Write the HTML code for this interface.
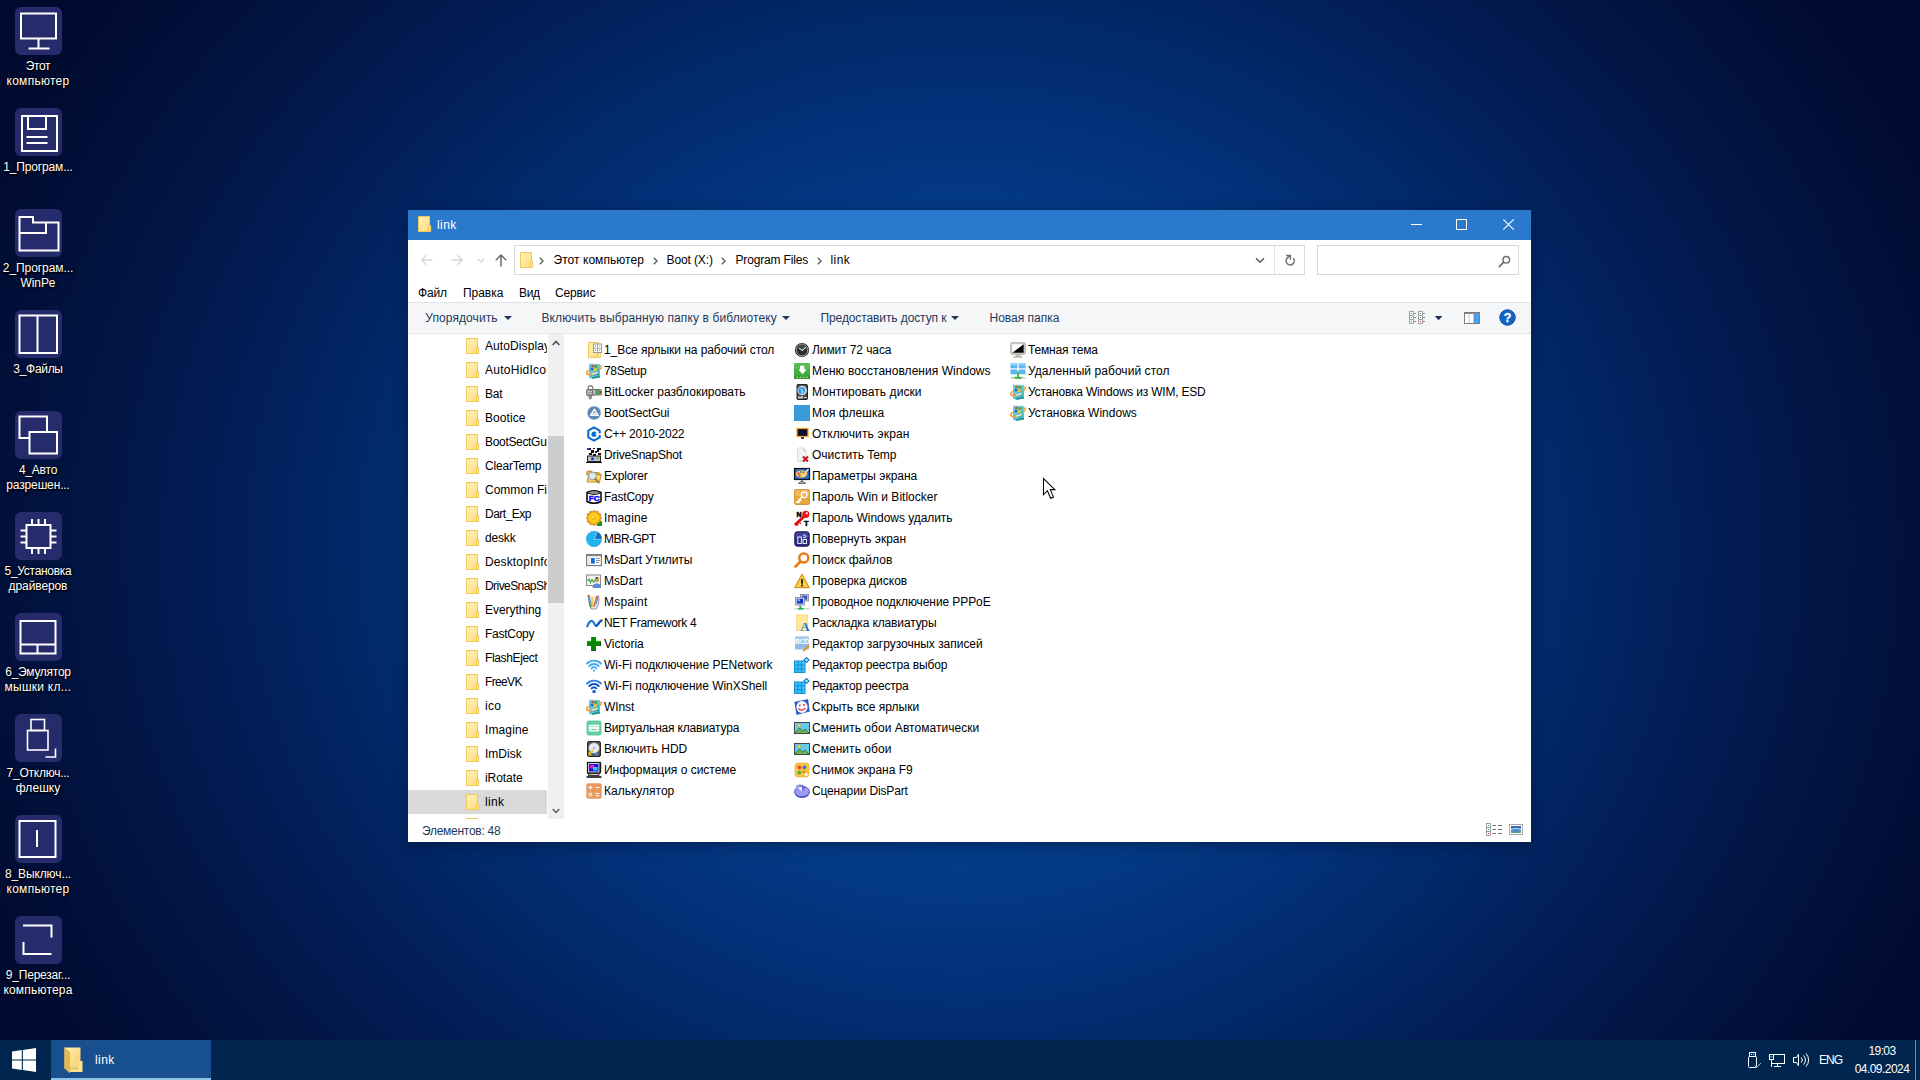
<!DOCTYPE html><html><head><meta charset="utf-8"><title>link</title><style>*{box-sizing:border-box;margin:0;padding:0}
html,body{width:1920px;height:1080px;overflow:hidden;background:#03102f}
body{font-family:"Liberation Sans",sans-serif;font-size:12px;color:#000}
#desk{position:absolute;left:0;top:0;width:1920px;height:1080px;overflow:hidden;
background:radial-gradient(ellipse 1080px 950px at 962px 545px,#0448a8 0%,#04409a 20%,#033b87 34%,#03317a 45%,#022868 57%,#021e58 68%,#021645 80%,#010e36 93%,#010a2e 100%)}
.dicon{position:absolute;left:0;width:76px;height:96px}
.dbox{position:absolute;left:14.500px;top:0;width:47.500px;height:48px;border-radius:6px;background:#262b6b}
.dbox svg{position:absolute;left:-.5px;top:0}
.dlab{position:absolute;left:-12px;width:100px;top:52px;text-align:center;color:#fff;font-size:12px;line-height:15px;text-shadow:0 1px 2px #000,0 0 3px rgba(0,0,0,.9),1px 1px 1px rgba(0,0,0,.8)}
#win{position:absolute;left:408px;top:210px;width:1123px;height:632px;background:#fff;box-shadow:0 0 0 1px rgba(10,40,100,.45),0 3px 14px rgba(0,0,0,.32)}
#title{position:absolute;left:0;top:0;width:100%;height:30px;background:#2b79cd}
.tfold{position:absolute;left:9px;top:6px;width:16px;height:16px}
.ttext{position:absolute;left:29px;top:0;line-height:30px;color:#fff;font-size:12px}
#nav{position:absolute;left:0;top:30px;width:100%;height:43px}
#addr{position:absolute;left:106px;top:5px;width:791px;height:30px;border:1px solid #d9d9d9;background:#fff}
#addr .afold{position:absolute;left:4px;top:6px}
.crumb{position:absolute;top:11px}
.ct{position:absolute;top:0;line-height:28px;font-size:12px;color:#000;white-space:nowrap}
#search{position:absolute;left:909px;top:5px;width:202px;height:30px;border:1px solid #d9d9d9}
#menu{position:absolute;left:0;top:73px;width:100%;height:19px}
#menu span{position:absolute;top:0;line-height:20px;white-space:nowrap}
#tool{position:absolute;left:0;top:92px;width:100%;height:32px;background:#f5f6f7;border-top:1px solid #e3e4e6;border-bottom:1px solid #e8e9ea}
.tb{position:absolute;top:0;line-height:30px;color:#1e395b;white-space:nowrap}
.dd{position:absolute;top:13px;width:0;height:0;border-left:4px solid transparent;border-right:4px solid transparent;border-top:4px solid #1e395b}
#tree{position:absolute;left:0;top:124px;width:139px;height:485px;overflow:hidden}
.trow{position:absolute;left:0;width:139px;height:24px}
.trow.sel{background:#d9d9d9}
.trow svg{position:absolute;left:57px;top:4px}
.trow span{position:absolute;left:77px;top:0;line-height:24px;white-space:nowrap}
#vsb{position:absolute;left:140px;top:124px;width:16px;height:485px;background:#f0f0f0}
#thumb{position:absolute;left:0;top:102px;width:16px;height:167px;background:#cdcdcd}
#files{position:absolute;left:0;top:0}
.f{position:absolute;height:16px;white-space:nowrap}
.f svg{position:absolute;left:0;top:0}
.f span{position:absolute;left:18px;top:0;line-height:16px}
#status{position:absolute;left:0;top:610px;width:100%;height:22px}
#status span{position:absolute;left:14px;top:0;line-height:22px;color:#1e395b}
#tbar{position:absolute;left:0;top:1040px;width:1920px;height:40px;background:#00264f;color:#fff}
#start{position:absolute;left:0;top:0;width:48px;height:40px}
#task{position:absolute;left:51px;top:0;width:160px;height:40px;background:#174f8f}
#task span{position:absolute;left:44px;top:1px;line-height:39px}
#task .ul{position:absolute;left:0;bottom:0;width:100%;height:2px;background:#8fc3ea}
#lang{position:absolute;left:1819px;top:1px;line-height:39px;font-size:12px}
#clock{position:absolute;left:1845px;width:74px;top:2px;text-align:center;line-height:18px;font-size:12px}
#sd{position:absolute;left:1915px;top:0;width:1px;height:40px;background:#7f8a99}
svg{display:block;overflow:visible}

#status i{position:absolute;left:102px;top:5px;width:1px;height:11px;background:#f3f3f3}
</style></head><body>
<svg width="0" height="0" style="position:absolute"><defs><linearGradient id="gf" x1="0" y1="0" x2="1" y2="1"><stop offset="0" stop-color="#fff2bd"/><stop offset="1" stop-color="#ffdc7a"/></linearGradient><linearGradient id="gf2" x1="0" y1="0" x2="1" y2="1"><stop offset="0" stop-color="#fff0b4"/><stop offset="1" stop-color="#f7cf66"/></linearGradient><linearGradient id="gi" x1="0" y1="0" x2="1" y2="1"><stop offset="0" stop-color="#a6e2f5"/><stop offset=".5" stop-color="#62c2de"/><stop offset="1" stop-color="#27a396"/></linearGradient></defs></svg>
<div id="desk">
<div class="dicon" style="top:7px"><div class="dbox"><svg width="48" height="48" viewBox="0 0 48 48" ><rect x="7" y="6.5" width="35" height="25" fill="none" stroke="#fff" stroke-width="2"/><path d="M24.5 31.5v10M14.5 41.5h21" fill="none" stroke="#fff" stroke-width="2"/></svg></div><div class="dlab"><span style="letter-spacing:-0.327px">Этот</span><br><span style="letter-spacing:0.276px">компьютер</span></div></div>
<div class="dicon" style="top:108px"><div class="dbox"><svg width="48" height="48" viewBox="0 0 48 48" ><rect x="8" y="8" width="35" height="35" fill="none" stroke="#fff" stroke-width="2"/><path d="M14 8v13h18v-13M12.5 29h21M12.5 35h21" fill="none" stroke="#fff" stroke-width="2"/></svg></div><div class="dlab"><span style="letter-spacing:-0.141px">1_Програм...</span></div></div>
<div class="dicon" style="top:209px"><div class="dbox"><svg width="48" height="48" viewBox="0 0 48 48" ><path d="M5.5 8h13.5v5.5h25.5v28h-39z" fill="none" stroke="#fff" stroke-width="2"/><path d="M5.5 24h26.5v-10.5" fill="none" stroke="#fff" stroke-width="2"/></svg></div><div class="dlab"><span style="letter-spacing:-0.075px">2_Програм...</span><br><span style="letter-spacing:-0.089px">WinPe</span></div></div>
<div class="dicon" style="top:310px"><div class="dbox"><svg width="48" height="48" viewBox="0 0 48 48" ><rect x="5.5" y="5.5" width="37.5" height="37.5" fill="none" stroke="#fff" stroke-width="2"/><path d="M23.5 5.5v37.5" fill="none" stroke="#fff" stroke-width="2"/></svg></div><div class="dlab"><span style="letter-spacing:-0.312px">3_Файлы</span></div></div>
<div class="dicon" style="top:411px"><div class="dbox"><svg width="48" height="48" viewBox="0 0 48 48" ><rect x="15.5" y="21" width="27.5" height="21.5" fill="none" stroke="#fff" stroke-width="2"/><path d="M15.5 27h-10v-21.5h27.5v15.5" fill="none" stroke="#fff" stroke-width="2"/></svg></div><div class="dlab"><span style="letter-spacing:-0.217px">4_Авто</span><br><span style="letter-spacing:-0.136px">разрешен...</span></div></div>
<div class="dicon" style="top:512px"><div class="dbox"><svg width="48" height="48" viewBox="0 0 48 48" ><rect x="12.5" y="13" width="24" height="23" fill="none" stroke="#fff" stroke-width="2"/><path d="M18 7v6M24.5 7v6M31 7v6M18 36v6M24.5 36v6M31 36v6M6.5 18.5h6M6.5 24.5h6M6.5 30.5h6M36.5 18.5h6M36.5 24.5h6M36.5 30.5h6" fill="none" stroke="#fff" stroke-width="2"/></svg></div><div class="dlab"><span style="letter-spacing:-0.298px">5_Установка</span><br><span style="letter-spacing:-0.100px">драйверов</span></div></div>
<div class="dicon" style="top:613px"><div class="dbox"><svg width="48" height="48" viewBox="0 0 48 48" ><rect x="6.5" y="8" width="35" height="32.5" fill="none" stroke="#fff" stroke-width="2"/><path d="M6.5 31.5h35M23.5 31.5v9" fill="none" stroke="#fff" stroke-width="2"/></svg></div><div class="dlab"><span style="letter-spacing:-0.277px">6_Эмулятор</span><br><span style="letter-spacing:0.237px">мышки кл...</span></div></div>
<div class="dicon" style="top:714px"><div class="dbox"><svg width="48" height="48" viewBox="0 0 48 48" ><rect x="17" y="5.5" width="13.5" height="11" fill="none" stroke="#fff" stroke-width="1.6"/><rect x="13.5" y="16.5" width="20.5" height="19.5" fill="none" stroke="#fff" stroke-width="1.6"/><path d="M41.5 34.5v8.5h-10" fill="none" stroke="#fff" stroke-width="1.6"/></svg></div><div class="dlab"><span style="letter-spacing:-0.242px">7_Отключ...</span><br><span style="letter-spacing:0.051px">флешку</span></div></div>
<div class="dicon" style="top:815px"><div class="dbox"><svg width="48" height="48" viewBox="0 0 48 48" ><rect x="5.5" y="6" width="36" height="36" fill="none" stroke="#fff" stroke-width="2"/><path d="M23 15v17" fill="none" stroke="#fff" stroke-width="2"/></svg></div><div class="dlab"><span style="letter-spacing:-0.105px">8_Выключ...</span><br><span style="letter-spacing:0.276px">компьютер</span></div></div>
<div class="dicon" style="top:916px"><div class="dbox"><svg width="48" height="48" viewBox="0 0 48 48" ><path d="M9 9.5h28.5v12M9.5 26v12h28" fill="none" stroke="#fff" stroke-width="2"/></svg></div><div class="dlab"><span style="letter-spacing:-0.211px">9_Перезаг...</span><br><span style="letter-spacing:0.201px">компьютера</span></div></div>
<div id="win">
<div id="title"><span class="tfold"><svg width="16" height="16" viewBox="0 0 16 16" ><path d="M1.5 .5h11v15h-11z" fill="url(#gf)" stroke="#efc95c"/><path d="M11.3 9.5h2.400v6h-2.400z" fill="#ffe69a" stroke="#efc95c"/></svg></span><span class="ttext" style="letter-spacing:0.421px">link</span><svg style="position:absolute;left:1003px;top:14px" width="11" height="2"><rect width="11" height="1" y="0" fill="#fff"/></svg><svg style="position:absolute;left:1048px;top:9px" width="11" height="11"><rect x=".5" y=".5" width="10" height="10" fill="none" stroke="#fff"/></svg><svg style="position:absolute;left:1095px;top:9px" width="11" height="11"><path d="M.3 .3l10.400 10.400M10.700 .3l-10.400 10.400" stroke="#fff" stroke-width="1.100"/></svg></div>
<div id="nav"><svg style="position:absolute;left:13px;top:14px" width="12" height="12" viewBox="0 0 12 12"><path d="M11.500 6h-10.500M5.500 1.200l-4.800 4.800 4.800 4.800" fill="none" stroke="#d6d6d6" stroke-width="1.300"/></svg><svg style="position:absolute;left:43px;top:14px" width="12" height="12" viewBox="0 0 12 12"><path d="M.5 6h10.500M6.500 1.200l4.800 4.800-4.800 4.800" fill="none" stroke="#d6d6d6" stroke-width="1.300"/></svg><svg style="position:absolute;left:69px;top:18px" width="8" height="5" viewBox="0 0 8 5"><path d="M.7 .7l3.300 3.300 3.300-3.300" fill="none" stroke="#d0d0d0" stroke-width="1.100"/></svg><svg style="position:absolute;left:87px;top:14px" width="12" height="13" viewBox="0 0 12 13"><path d="M6 12.500v-11M.8 6.200l5.200-5.200 5.200 5.200" fill="none" stroke="#6b6b6b" stroke-width="1.500"/></svg><div id="addr"><svg class=afold width="16" height="16" viewBox="0 0 16 16" ><path d="M1.5 .5h11v15h-11z" fill="url(#gf)" stroke="#efc95c"/><path d="M11.3 9.5h2.400v6h-2.400z" fill="#ffe69a" stroke="#efc95c"/></svg><span class="crumb" style="left:24px"><svg width="5" height="8" viewBox="0 0 5 8"><path d="M.8 .8l3.200 3.200-3.200 3.200" fill="none" stroke="#5e5e5e" stroke-width="1.400"/></svg></span><span class="ct" style="left:38.5px;letter-spacing:0.048px">Этот компьютер</span><span class="crumb" style="left:138px"><svg width="5" height="8" viewBox="0 0 5 8"><path d="M.8 .8l3.200 3.200-3.200 3.200" fill="none" stroke="#5e5e5e" stroke-width="1.400"/></svg></span><span class="ct" style="left:151.5px;letter-spacing:-0.118px">Boot (X:)</span><span class="crumb" style="left:206px"><svg width="5" height="8" viewBox="0 0 5 8"><path d="M.8 .8l3.200 3.200-3.200 3.200" fill="none" stroke="#5e5e5e" stroke-width="1.400"/></svg></span><span class="ct" style="left:220.5px;letter-spacing:-0.161px">Program Files</span><span class="crumb" style="left:302px"><svg width="5" height="8" viewBox="0 0 5 8"><path d="M.8 .8l3.200 3.200-3.200 3.200" fill="none" stroke="#5e5e5e" stroke-width="1.400"/></svg></span><span class="ct" style="left:315.5px;letter-spacing:0.421px">link</span><svg style="position:absolute;left:740px;top:11px" width="10" height="7" viewBox="0 0 10 7"><path d="M1 1.200l4 4 4-4" fill="none" stroke="#5a5a5a" stroke-width="1.500"/></svg><div style="position:absolute;left:759px;top:0;width:1px;height:29px;background:#e0e0e0"></div><svg style="position:absolute;left:769px;top:8px" width="12" height="13" viewBox="0 0 12 13"><path d="M9.300 4.200A4.100 4.100 0 1 1 3.100 4.100L5.800 1.900" fill="none" stroke="#707070" stroke-width="1.500"/><path d="M2 1.500H6.400V5.800" fill="none" stroke="#707070" stroke-width="1.400"/></svg></div><div id="search"><svg style="position:absolute;left:180px;top:9px" width="13" height="13" viewBox="0 0 13 13"><circle cx="8.300" cy="4.700" r="3.300" fill="none" stroke="#6e6e6e" stroke-width="1.500"/><path d="M5.800 7.200l-5 5" stroke="#6e6e6e" stroke-width="1.700"/></svg></div></div>
<div id="menu"><span style="left:10px;letter-spacing:-0.129px">Файл</span><span style="left:55px;letter-spacing:-0.041px">Правка</span><span style="left:111px;letter-spacing:-0.340px">Вид</span><span style="left:147px;letter-spacing:-0.132px">Сервис</span></div>
<div id="tool"><span class="tb" style="left:17.30000000000001px;letter-spacing:0.080px">Упорядочить</span><i class="dd" style="left:95.5px"></i><span class="tb" style="left:133.5px;letter-spacing:0.105px">Включить выбранную папку в библиотеку</span><i class="dd" style="left:374px"></i><span class="tb" style="left:412.5px;letter-spacing:-0.103px">Предоставить доступ к</span><i class="dd" style="left:543px"></i><span class="tb" style="left:581.5px;letter-spacing:-0.014px">Новая папка</span><svg style="position:absolute;left:1001px;top:8px" width="36" height="14" viewBox="0 0 36 14"><g fill="#fff" stroke="#a2a2a2" stroke-width="1"><rect x=".5" y=".5" width="4" height="4"/><rect x=".5" y="4.500" width="4" height="4"/><rect x=".5" y="8.500" width="4" height="4"/><rect x="9.500" y=".5" width="4" height="4"/><rect x="9.500" y="4.500" width="4" height="4"/><rect x="9.500" y="8.500" width="4" height="4"/></g><g stroke="#8a8a8a" stroke-width="1"><path d="M5 2.500h2M5 6.500h2M5 10.500h2M14 2.500h2M14 6.500h2M14 10.500h2"/></g><g><rect x="2" y="2" width="1" height="1" fill="#3a7a5a"/><rect x="2" y="6" width="1" height="1" fill="#4a8af0"/><rect x="2" y="10" width="1" height="1" fill="#e02020"/><rect x="11" y="2" width="1" height="1" fill="#3a7a5a"/><rect x="11" y="6" width="1" height="1" fill="#4a8af0"/><rect x="11" y="10" width="1" height="1" fill="#e02020"/></g><path d="M25.800 5h7.600l-3.800 4.200z" fill="#1e2f55"/></svg><svg style="position:absolute;left:1056px;top:9px" width="16" height="12" viewBox="0 0 16 12"><rect x=".5" y=".5" width="15" height="11" fill="#fff" stroke="#7d7d7d"/><rect x="1" y="1" width="14" height="1" fill="#8a8a8a"/><rect x="9.500" y="2" width="5.500" height="9" fill="#4a9fe6"/><path d="M5 2v9" stroke="#d0d0d0" stroke-width="1"/></svg><svg style="position:absolute;left:1091px;top:6.200px" width="17" height="17" viewBox="0 0 17 17"><circle cx="8.500" cy="8.500" r="7.800" fill="#0b64c8" stroke="#0a3f8a" stroke-width=".8"/><text x="8.500" y="13" font-family="Liberation Sans" font-weight="bold" font-size="12.500" text-anchor="middle" fill="#fff" stroke="#fff" stroke-width=".3">?</text></svg></div>
<div id="tree">
<div class="trow" style="top:0px"><svg width="16" height="16" viewBox="0 0 16 16" ><path d="M1.5 .5h11v15h-11z" fill="url(#gf)" stroke="#efc95c"/><path d="M11.3 9.5h2.400v6h-2.400z" fill="#ffe69a" stroke="#efc95c"/></svg><span style="letter-spacing:0.088px">AutoDisplay</span></div>
<div class="trow" style="top:24px"><svg width="16" height="16" viewBox="0 0 16 16" ><path d="M1.5 .5h11v15h-11z" fill="url(#gf)" stroke="#efc95c"/><path d="M11.3 9.5h2.400v6h-2.400z" fill="#ffe69a" stroke="#efc95c"/></svg><span style="letter-spacing:0.255px">AutoHidIcons</span></div>
<div class="trow" style="top:48px"><svg width="16" height="16" viewBox="0 0 16 16" ><path d="M1.5 .5h11v15h-11z" fill="url(#gf)" stroke="#efc95c"/><path d="M11.3 9.5h2.400v6h-2.400z" fill="#ffe69a" stroke="#efc95c"/></svg><span style="letter-spacing:-0.172px">Bat</span></div>
<div class="trow" style="top:72px"><svg width="16" height="16" viewBox="0 0 16 16" ><path d="M1.5 .5h11v15h-11z" fill="url(#gf)" stroke="#efc95c"/><path d="M11.3 9.5h2.400v6h-2.400z" fill="#ffe69a" stroke="#efc95c"/></svg><span style="letter-spacing:0.067px">Bootice</span></div>
<div class="trow" style="top:96px"><svg width="16" height="16" viewBox="0 0 16 16" ><path d="M1.5 .5h11v15h-11z" fill="url(#gf)" stroke="#efc95c"/><path d="M11.3 9.5h2.400v6h-2.400z" fill="#ffe69a" stroke="#efc95c"/></svg><span style="letter-spacing:-0.322px">BootSectGui</span></div>
<div class="trow" style="top:120px"><svg width="16" height="16" viewBox="0 0 16 16" ><path d="M1.5 .5h11v15h-11z" fill="url(#gf)" stroke="#efc95c"/><path d="M11.3 9.5h2.400v6h-2.400z" fill="#ffe69a" stroke="#efc95c"/></svg><span style="letter-spacing:-0.198px">ClearTemp</span></div>
<div class="trow" style="top:144px"><svg width="16" height="16" viewBox="0 0 16 16" ><path d="M1.5 .5h11v15h-11z" fill="url(#gf)" stroke="#efc95c"/><path d="M11.3 9.5h2.400v6h-2.400z" fill="#ffe69a" stroke="#efc95c"/></svg><span style="letter-spacing:-0.002px">Common Files</span></div>
<div class="trow" style="top:168px"><svg width="16" height="16" viewBox="0 0 16 16" ><path d="M1.5 .5h11v15h-11z" fill="url(#gf)" stroke="#efc95c"/><path d="M11.3 9.5h2.400v6h-2.400z" fill="#ffe69a" stroke="#efc95c"/></svg><span style="letter-spacing:-0.504px">Dart_Exp</span></div>
<div class="trow" style="top:192px"><svg width="16" height="16" viewBox="0 0 16 16" ><path d="M1.5 .5h11v15h-11z" fill="url(#gf)" stroke="#efc95c"/><path d="M11.3 9.5h2.400v6h-2.400z" fill="#ffe69a" stroke="#efc95c"/></svg><span style="letter-spacing:-0.172px">deskk</span></div>
<div class="trow" style="top:216px"><svg width="16" height="16" viewBox="0 0 16 16" ><path d="M1.5 .5h11v15h-11z" fill="url(#gf)" stroke="#efc95c"/><path d="M11.3 9.5h2.400v6h-2.400z" fill="#ffe69a" stroke="#efc95c"/></svg><span style="letter-spacing:0.132px">DesktopInfo</span></div>
<div class="trow" style="top:240px"><svg width="16" height="16" viewBox="0 0 16 16" ><path d="M1.5 .5h11v15h-11z" fill="url(#gf)" stroke="#efc95c"/><path d="M11.3 9.5h2.400v6h-2.400z" fill="#ffe69a" stroke="#efc95c"/></svg><span style="letter-spacing:-0.565px">DriveSnapShot</span></div>
<div class="trow" style="top:264px"><svg width="16" height="16" viewBox="0 0 16 16" ><path d="M1.5 .5h11v15h-11z" fill="url(#gf)" stroke="#efc95c"/><path d="M11.3 9.5h2.400v6h-2.400z" fill="#ffe69a" stroke="#efc95c"/></svg><span style="letter-spacing:-0.045px">Everything</span></div>
<div class="trow" style="top:288px"><svg width="16" height="16" viewBox="0 0 16 16" ><path d="M1.5 .5h11v15h-11z" fill="url(#gf)" stroke="#efc95c"/><path d="M11.3 9.5h2.400v6h-2.400z" fill="#ffe69a" stroke="#efc95c"/></svg><span style="letter-spacing:-0.264px">FastCopy</span></div>
<div class="trow" style="top:312px"><svg width="16" height="16" viewBox="0 0 16 16" ><path d="M1.5 .5h11v15h-11z" fill="url(#gf)" stroke="#efc95c"/><path d="M11.3 9.5h2.400v6h-2.400z" fill="#ffe69a" stroke="#efc95c"/></svg><span style="letter-spacing:-0.353px">FlashEject</span></div>
<div class="trow" style="top:336px"><svg width="16" height="16" viewBox="0 0 16 16" ><path d="M1.5 .5h11v15h-11z" fill="url(#gf)" stroke="#efc95c"/><path d="M11.3 9.5h2.400v6h-2.400z" fill="#ffe69a" stroke="#efc95c"/></svg><span style="letter-spacing:-0.656px">FreeVK</span></div>
<div class="trow" style="top:360px"><svg width="16" height="16" viewBox="0 0 16 16" ><path d="M1.5 .5h11v15h-11z" fill="url(#gf)" stroke="#efc95c"/><path d="M11.3 9.5h2.400v6h-2.400z" fill="#ffe69a" stroke="#efc95c"/></svg><span style="letter-spacing:0.302px">ico</span></div>
<div class="trow" style="top:384px"><svg width="16" height="16" viewBox="0 0 16 16" ><path d="M1.5 .5h11v15h-11z" fill="url(#gf)" stroke="#efc95c"/><path d="M11.3 9.5h2.400v6h-2.400z" fill="#ffe69a" stroke="#efc95c"/></svg><span style="letter-spacing:0.114px">Imagine</span></div>
<div class="trow" style="top:408px"><svg width="16" height="16" viewBox="0 0 16 16" ><path d="M1.5 .5h11v15h-11z" fill="url(#gf)" stroke="#efc95c"/><path d="M11.3 9.5h2.400v6h-2.400z" fill="#ffe69a" stroke="#efc95c"/></svg><span style="letter-spacing:0.013px">ImDisk</span></div>
<div class="trow" style="top:432px"><svg width="16" height="16" viewBox="0 0 16 16" ><path d="M1.5 .5h11v15h-11z" fill="url(#gf)" stroke="#efc95c"/><path d="M11.3 9.5h2.400v6h-2.400z" fill="#ffe69a" stroke="#efc95c"/></svg><span style="letter-spacing:-0.076px">iRotate</span></div>
<div class="trow sel" style="top:456px"><svg width="16" height="16" viewBox="0 0 16 16" ><path d="M1.5 .5h11v15h-11z" fill="url(#gf)" stroke="#efc95c"/><path d="M11.3 9.5h2.400v6h-2.400z" fill="#ffe69a" stroke="#efc95c"/></svg><span style="letter-spacing:0.309px">link</span></div>
<div class="trow" style="top:480px"><svg width="16" height="16" viewBox="0 0 16 16" ><path d="M1.5 .5h11v15h-11z" fill="url(#gf)" stroke="#efc95c"/><path d="M11.3 9.5h2.400v6h-2.400z" fill="#ffe69a" stroke="#efc95c"/></svg></div>
</div>
<div id="vsb"><div id="thumb"></div><svg style="position:absolute;left:4px;top:5.500px" width="8" height="6" viewBox="0 0 8 6"><path d="M.6 5l3.400-3.600 3.400 3.600" fill="none" stroke="#505050" stroke-width="1.600"/></svg><svg style="position:absolute;left:4px;top:474px" width="8" height="6" viewBox="0 0 8 6"><path d="M.7 1l3.300 3.500 3.300-3.500" fill="none" stroke="#5a5a5a" stroke-width="1.400"/></svg></div>
<div id="files">
<div class="f" style="left:178px;top:132px"><svg width="16" height="16" viewBox="0 0 16 16" ><path d="M2.500 .5h10v15h-10z" fill="url(#gf)" stroke="#efc95c"/><path d="M11.500 10h2.800v5.500h-2.800z" fill="#ffe69a" stroke="#efc95c"/><rect x="7.500" y="2" width="8" height="8.500" fill="#fff" stroke="#9a9a9a"/><path d="M11.500 2v8.500M7.500 6.200h8" stroke="#9a9a9a" stroke-width=".8"/><rect x="9" y="3.600" width="1" height="1" fill="#6a9a4a"/><rect x="13" y="3.600" width="1" height="1" fill="#e0b030"/><rect x="9" y="7.800" width="1" height="1" fill="#3a7ad8"/><rect x="13" y="7.800" width="1" height="1" fill="#d83a3a"/></svg><span style="letter-spacing:-0.065px">1_Все ярлыки на рабочий стол</span></div>
<div class="f" style="left:178px;top:153px"><svg width="16" height="16" viewBox="0 0 16 16" ><path d="M3.3 .4l10.500 .7v13.300l-7.600 1.400-2.900-1.300z" fill="url(#gi)"/><path d="M3.300 .4l1.300 .5v14.300l-1.300-.7z" fill="#5ab8d8"/><path d="M6.200 14.300l7.600-1.200v1.300l-7.600 1.400z" fill="#1f8f86"/><path d="M5.200 1.900q1.400-.7 2.700 0v2.500q-1.300-.7-2.700 0z" fill="#ee4a23"/><path d="M8.300 1.900q1.300.7 2.700 0v2.500q-1.400.7-2.700 0z" fill="#4ea32c"/><path d="M4.700 5q1.400-.7 2.700 0v2.600q-1.300-.7-2.700 0z" fill="#0f6fd6"/><path d="M7.800 5.100q1.300.7 2.700 0v2.600q-1.400.7-2.700 0z" fill="#fbc70e"/><path d="M13.300 3.300c2.600-.9 3 1.300 .4 3.500" fill="none" stroke="#f59d2f" stroke-width="1.400"/><path d="M3.400 7.100c-3.600 1.500-3.900 4.400 .6 4.400 2.400 0 5-.8 7-1.800" fill="none" stroke="#f59d2f" stroke-width="1.500"/><path d="M6.500 11c1.900-.3 3.400-.8 4.700-1.600" fill="none" stroke="#fff1d4" stroke-width="1.200" stroke-linecap="round"/></svg><span style="letter-spacing:-0.353px">78Setup</span></div>
<div class="f" style="left:178px;top:174px"><svg width="16" height="16" viewBox="0 0 16 16" ><path d="M2.200 6v-2a2.300 2.300 0 0 1 4.600 0v2" fill="none" stroke="#8a8a8a" stroke-width="1.400"/><rect x=".5" y="5.500" width="7" height="6" rx="1" fill="#9a9a9a" stroke="#6e6e6e"/><path d="M.8 7.500h6.500M.8 9.500h6.500" stroke="#c8c8c8" stroke-width=".8"/><rect x="3" y="11" width="2.500" height="4" rx="1.200" fill="#9a9a9a" stroke="#6e6e6e" stroke-width=".8"/><rect x="6.500" y="5.500" width="9" height="5.500" rx="1" fill="#b8b8b8" stroke="#6e6e6e"/><rect x="10" y="6.800" width="3.500" height="3" fill="#3cc43c" stroke="#555" stroke-width=".6"/><rect x="14" y="7" width="1" height="2.500" fill="#555"/></svg><span style="letter-spacing:-0.012px">BitLocker разблокировать</span></div>
<div class="f" style="left:178px;top:195px"><svg width="16" height="16" viewBox="0 0 16 16" ><circle cx="8.100" cy="7.900" r="7.200" fill="#c9d6e8"/><circle cx="8.100" cy="7.900" r="6.500" fill="#5f84b7"/><path d="M8.300 4.300l3.900 6h-7.600z" fill="none" stroke="#fff" stroke-width="1.500" stroke-linejoin="round"/><path d="M6.300 8.600h3.400" stroke="#fff" stroke-width="1.400"/></svg><span style="letter-spacing:-0.193px">BootSectGui</span></div>
<div class="f" style="left:178px;top:216px"><svg width="16" height="16" viewBox="0 0 16 16" ><path d="M8 1.300l5.700 3.300v6.800l-5.700 3.300-5.700-3.300v-6.800z" fill="#fff" stroke="#0b6cd0" stroke-width="2.100" stroke-linejoin="round"/><rect x="12" y="7.300" width="4" height="1.700" fill="#fff"/><circle cx="8" cy="8.200" r="2.600" fill="#0b6cd0"/><rect x="9.500" y="7.600" width="2.500" height="1.100" fill="#fff"/></svg><span style="letter-spacing:-0.243px">C++ 2010-2022</span></div>
<div class="f" style="left:178px;top:237px"><svg width="16" height="16" viewBox="0 0 16 16" ><path d="M2 1h3v2h-3zM7 1h2v1h-2zM11 1h4v2h-2v2h-2zM5 3h3v3h-3zM9 4h2v2h-2zM3 6h3v2h-3zM12 6h3v2h-3zM7 7h3v2h-3z" fill="#111"/><rect x="1" y="1" width="2.500" height="2" fill="#1a3ae0"/><rect x="1.500" y="9" width="13" height="5.500" fill="#c0c0c0" stroke="#222" stroke-width="1"/><rect x="10.500" y="10.500" width="2.500" height="1.500" fill="#2ad02a"/><path d="M0 15.500h16" stroke="#111" stroke-width="1"/><circle cx="6.500" cy="11.800" r="1.500" fill="#1a3ae0"/></svg><span style="letter-spacing:-0.228px">DriveSnapShot</span></div>
<div class="f" style="left:178px;top:258px"><svg width="16" height="16" viewBox="0 0 16 16" ><path d="M.8 4.500c0-1 .5-1.500 1.500-1.500h3l1.500 1.500h5.500c1 0 1.500.5 1.500 1.500v1h-13z" fill="#e8b84a" stroke="#a87818" stroke-width=".8"/><path d="M1 14l1.800-7.500h12.700l-2 7.500z" fill="#fbd66e" stroke="#a87818" stroke-width=".8"/><circle cx="6.500" cy="8" r="3.800" fill="#d8ecfa" stroke="#8aa4bc" stroke-width="1.100" fill-opacity=".9"/><path d="M9.200 10.800l3.500 3.700" stroke="#b07a28" stroke-width="2" stroke-linecap="round"/></svg><span style="letter-spacing:-0.148px">Explorer</span></div>
<div class="f" style="left:178px;top:279px"><svg width="16" height="16" viewBox="0 0 16 16" ><path d="M1 3.500q7-3.600 14 0v9q-7 3.600-14 0z" fill="#fff" stroke="#000" stroke-width="1.500" stroke-linejoin="round"/><path d="M1.700 3.600q6.300-3 12.600 0q-6.300 2.600-12.600 0z" fill="#8c8c8c"/><path d="M1.700 4.300q6.300 2.600 12.600 0" fill="none" stroke="#000" stroke-width=".9"/><text x="8.100" y="12.200" font-family="Liberation Sans" font-weight="bold" font-size="8" text-anchor="middle" fill="#0a0aff" stroke="#0a0aff" stroke-width=".55">FC</text></svg><span style="letter-spacing:-0.232px">FastCopy</span></div>
<div class="f" style="left:178px;top:300px"><svg width="16" height="16" viewBox="0 0 16 16" ><path d="M8.00 0.20L9.60 2.01L11.90 1.25L12.38 3.62L14.75 4.10L13.99 6.40L15.80 8.00L13.99 9.60L14.75 11.90L12.38 12.38L11.90 14.75L9.60 13.99L8.00 15.80L6.40 13.99L4.10 14.75L3.62 12.38L1.25 11.90L2.01 9.60L0.20 8.00L2.01 6.40L1.25 4.10L3.62 3.62L4.10 1.25L6.40 2.01z" fill="#f7b50c" stroke="#b8690c" stroke-width=".8" stroke-linejoin="round"/><circle cx="8" cy="8" r="5" fill="#fdd21c"/><circle cx="7.600" cy="7.700" r="2.200" fill="#f7a80a"/><circle cx="7.300" cy="7.300" r="1.100" fill="#fff3b0"/><path d="M16 11.200v4.800h-5.200a6 6 0 0 1 5.200-4.800z" fill="#1f8f12"/></svg><span style="letter-spacing:0.114px">Imagine</span></div>
<div class="f" style="left:178px;top:321px"><svg width="16" height="16" viewBox="0 0 16 16" ><circle cx="8" cy="8" r="7.700" fill="#1fb4ef" stroke="#1697d6" stroke-width=".5"/><path d="M8.400 8l2.600-7.200a7.700 7.700 0 0 1 4.700 7.200z" fill="#1a6eb4"/><path d="M7 8.300h8.700M8.300 8.300l2.600-7.300" fill="none" stroke="#9fe0fa" stroke-width=".7"/></svg><span style="letter-spacing:-0.549px">MBR-GPT</span></div>
<div class="f" style="left:178px;top:342px"><svg width="16" height="16" viewBox="0 0 16 16" ><rect x=".6" y="2.600" width="14.800" height="11" fill="#fff" stroke="#71757a" stroke-width="1.100"/><rect x="1" y="3" width="14" height="1.300" fill="#8a8e93"/><rect x="1.500" y="5" width="2.800" height="8" fill="#e6e6e6"/><rect x="5" y="6" width="3.800" height="5.600" fill="#0a6ee0"/><path d="M10 6.500h3.800M10 8.500h3.800M10 10.500h3" stroke="#8a8e93" stroke-width="1"/></svg><span style="letter-spacing:-0.100px">MsDart Утилиты</span></div>
<div class="f" style="left:178px;top:363px"><svg width="16" height="16" viewBox="0 0 16 16" ><rect x=".5" y="2" width="14" height="10.500" fill="#f4f4f4" stroke="#8a8a8a"/><path d="M1.500 8l1.500-2 1.500 3.500 1.500-3 1.500 2.500 1.500-1.500" fill="none" stroke="#2aa82a" stroke-width="1.100"/><circle cx="10.800" cy="7" r="2.300" fill="#c89868"/><path d="M6.500 15c0-3.500 2-4.500 4.300-4.500s4.300 1 4.300 4.500z" fill="#5a8ad0"/><path d="M9 5.500a2 2 0 0 1 3.800 0" fill="#5a3a1a"/></svg><span style="letter-spacing:-0.070px">MsDart</span></div>
<div class="f" style="left:178px;top:384px"><svg width="16" height="16" viewBox="0 0 16 16" ><circle cx="2.600" cy="2" r="1.300" fill="#d8701a"/><path d="M2.800 2.500l3 10" stroke="#3a7ad8" stroke-width="1.700"/><path d="M6 2.500l.6 10" stroke="#f7c314" stroke-width="1.700"/><path d="M11 2l-3.200 11" stroke="#f04a14" stroke-width="1.900"/><path d="M12.500 1.500l-2.500 9" stroke="#4a62c0" stroke-width="1.100"/><path d="M3.300 7.500l1.700 6" stroke="#2a9a2a" stroke-width="1.500"/><path d="M2.500 3.500q.3 8 2.700 11.500h5q3-4 3-11.500" fill="#c8d0dc" fill-opacity=".35" stroke="#5a6272" stroke-width=".8" stroke-opacity=".8"/></svg><span style="letter-spacing:0.210px">Mspaint</span></div>
<div class="f" style="left:178px;top:405px"><svg width="16" height="16" viewBox="0 0 16 16" ><path d="M1.300 11.200c1.600-3.700 3.400-5.600 4.900-5.200 1.800.5 2.300 5 4 5 1.700 0 2.800-4.700 5.200-5.500" fill="none" stroke="#1b7ad8" stroke-width="2.300" stroke-linecap="round"/><path d="M10.400 10.800c1.600-.3 2.700-4.500 5-5.300" fill="none" stroke="#0f52b0" stroke-width="2" stroke-linecap="round"/></svg><span style="letter-spacing:-0.326px">NET Framework 4</span></div>
<div class="f" style="left:178px;top:426px"><svg width="16" height="16" viewBox="0 0 16 16" ><path d="M5.100 1h4.900v4h4.700v5h-4.700v4.600h-4.900v-4.600h-4.100v-5h4.100z" fill="#078607"/><path d="M1 5.300h4.100M10 5.300h4.700" stroke="#10e010" stroke-width=".7"/><path d="M14.500 6v4M5.100 14.400h4.900" stroke="#000" stroke-width=".7"/></svg><span style="letter-spacing:-0.006px">Victoria</span></div>
<div class="f" style="left:178px;top:447px"><svg width="16" height="16" viewBox="0 0 16 16" ><g fill="none" stroke="#3fa9ee" stroke-width="1.900" stroke-linecap="round"><path d="M1 6.500a10 10 0 0 1 14 0"/><path d="M3.300 9a6.700 6.700 0 0 1 9.400 0"/><path d="M5.600 11.300a3.400 3.400 0 0 1 4.800 0"/></g><circle cx="8" cy="13.600" r="1.100" fill="#3fa9ee"/></svg><span style="letter-spacing:-0.005px">Wi-Fi подключение PENetwork</span></div>
<div class="f" style="left:178px;top:468px"><svg width="16" height="16" viewBox="0 0 16 16" ><g fill="none" stroke="#0b4fc4" stroke-width="1.900" stroke-linecap="round"><path d="M1 5.500a10 10 0 0 1 14 0" stroke="#2a86e0"/><path d="M3.300 8a6.700 6.700 0 0 1 9.400 0"/><path d="M5.600 10.400a3.400 3.400 0 0 1 4.800 0"/></g><circle cx="8" cy="13.500" r="1.700" fill="#0b4fc4"/><circle cx="7.600" cy="13.100" r=".6" fill="#7fb0ff"/></svg><span style="letter-spacing:-0.027px">Wi-Fi подключение WinXShell</span></div>
<div class="f" style="left:178px;top:489px"><svg width="16" height="16" viewBox="0 0 16 16" ><path d="M3.3 .4l10.500 .7v13.300l-7.600 1.400-2.900-1.300z" fill="url(#gi)"/><path d="M3.300 .4l1.300 .5v14.300l-1.300-.7z" fill="#5ab8d8"/><path d="M6.200 14.300l7.600-1.200v1.300l-7.600 1.400z" fill="#1f8f86"/><path d="M5.200 1.900q1.400-.7 2.700 0v2.500q-1.300-.7-2.700 0z" fill="#ee4a23"/><path d="M8.300 1.900q1.300.7 2.700 0v2.500q-1.400.7-2.700 0z" fill="#4ea32c"/><path d="M4.700 5q1.400-.7 2.700 0v2.600q-1.300-.7-2.700 0z" fill="#0f6fd6"/><path d="M7.800 5.100q1.300.7 2.700 0v2.600q-1.400.7-2.700 0z" fill="#fbc70e"/><path d="M13.300 3.300c2.600-.9 3 1.300 .4 3.500" fill="none" stroke="#f59d2f" stroke-width="1.400"/><path d="M3.400 7.100c-3.600 1.500-3.900 4.400 .6 4.400 2.400 0 5-.8 7-1.800" fill="none" stroke="#f59d2f" stroke-width="1.500"/><path d="M6.500 11c1.900-.3 3.400-.8 4.700-1.600" fill="none" stroke="#fff1d4" stroke-width="1.200" stroke-linecap="round"/></svg><span style="letter-spacing:-0.084px">WInst</span></div>
<div class="f" style="left:178px;top:510px"><svg width="16" height="16" viewBox="0 0 16 16" ><rect x=".5" y=".5" width="15" height="15" rx="2.800" fill="#66cda2"/><rect x="2.800" y="4.800" width="10.400" height="6.600" rx=".8" fill="#fff"/><path d="M4.200 6.700h1.200M6.200 6.700h1.200M8.200 6.700h1.200M10.200 6.700h1.600" stroke="#66cda2" stroke-width="1"/><path d="M4.200 9.600h1M6 9.600h4M10.800 9.600h1" stroke="#66cda2" stroke-width="1.100"/></svg><span style="letter-spacing:-0.174px">Виртуальная клавиатура</span></div>
<div class="f" style="left:178px;top:531px"><svg width="16" height="16" viewBox="0 0 16 16" ><rect x="1.500" y=".5" width="13" height="15" rx="1.500" fill="#5a5448" stroke="#2a2620"/><circle cx="8" cy="7" r="5.300" fill="#e6ecf2" stroke="#9aa4ae" stroke-width=".6"/><circle cx="8" cy="7" r="1.500" fill="#b8c4d0"/><path d="M3 12.500l4-3" stroke="#f0c020" stroke-width="1.800"/><rect x="8.500" y="12" width="3.500" height="2.500" fill="#2a8ae0"/><rect x="2.500" y="12.500" width="3" height="2" fill="#f0c020"/></svg><span style="letter-spacing:0.007px">Включить HDD</span></div>
<div class="f" style="left:178px;top:552px"><svg width="16" height="16" viewBox="0 0 16 16" ><rect x="1.500" y=".5" width="12.500" height="10.500" fill="#e8e8e8" stroke="#111" stroke-width="1.200"/><rect x="3" y="2" width="9.500" height="7.500" fill="#1010d8"/><rect x="4" y="3" width="4.500" height="3.500" fill="#e818d8"/><rect x="7" y="5" width="4.500" height="3.500" fill="#18d8e8"/><path d="M14 .5l1.200-.5v10l-1.200 1z" fill="#111"/><rect x="2.500" y="11.500" width="10.500" height="2" fill="#d0d0d0" stroke="#111" stroke-width=".8"/><path d="M.5 15h15" stroke="#111" stroke-width="1.600"/><rect x="3.500" y="12" width="1.500" height=".8" fill="#2ad02a"/></svg><span style="letter-spacing:-0.012px">Информация о системе</span></div>
<div class="f" style="left:178px;top:573px"><svg width="16" height="16" viewBox="0 0 16 16" ><rect x=".3" y=".3" width="15.400" height="15.400" rx="2" fill="#e9995e"/><path d="M2.500 4.500h4M4.500 2.500v4M9.500 4.500h4M2.800 9.800l3.400 3.400M6.200 9.800l-3.400 3.400M9.500 10.500h4M9.500 12.800h4" stroke="#fff" stroke-width="1.100"/></svg><span style="letter-spacing:0.000px">Калькулятор</span></div>
<div class="f" style="left:386px;top:132px"><svg width="16" height="16" viewBox="0 0 16 16" ><circle cx="8" cy="8" r="7.100" fill="#1e1e1e"/><circle cx="8" cy="8" r="5.900" fill="#2e2e2e" stroke="#dcdcdc" stroke-width=".7"/><path d="M2.500 6.500a5.700 5.700 0 0 1 11 0q-5.500 2.500-11 0z" fill="#555" fill-opacity=".7"/><path d="M8.200 8.400l3.700-3.100M8.200 8.400l-2.700-1.900" stroke="#fff" stroke-width="1" stroke-linecap="round"/></svg><span style="letter-spacing:-0.097px">Лимит 72 часа</span></div>
<div class="f" style="left:386px;top:153px"><svg width="16" height="16" viewBox="0 0 16 16" ><rect x="0" y="0" width="16" height="16" rx="1.800" fill="#43b03e"/><rect x="0" y="0" width="16" height="6" rx="1.800" fill="#62c25c" fill-opacity=".7"/><rect x="0" y="12.600" width="16" height="3.400" fill="#2f962d"/><path d="M6 2.800h4.300v3.700h2.500l-4.200 4.800-4.200-4.800h1.600z" fill="#fff"/><path d="M2.500 14.200h1.600M5.700 14.200h1.600M8.900 14.200h1.600M12.100 14.200h1.600" stroke="#e6f4e4" stroke-width="1.100"/></svg><span style="letter-spacing:0.036px">Меню восстановления Windows</span></div>
<div class="f" style="left:386px;top:174px"><svg width="16" height="16" viewBox="0 0 16 16" ><rect x="3" y=".5" width="10.500" height="15" rx="1" fill="#4a4a4a" stroke="#222"/><circle cx="8.200" cy="6.500" r="4.700" fill="#d8e6f2" stroke="#8a96a2" stroke-width=".6"/><circle cx="7.800" cy="6.500" r="3.300" fill="#2a8ad8"/><path d="M5.500 5q2 1 1.500 3t2 1.500q1.500-1 .5-3t-2-2z" fill="#7ad0f0"/><rect x="4" y="12.500" width="5" height="2" fill="#d0d0d0"/><path d="M10 13.500h2.500" stroke="#e8e8e8" stroke-width="1"/></svg><span style="letter-spacing:0.072px">Монтировать диски</span></div>
<div class="f" style="left:386px;top:195px"><svg width="16" height="16" viewBox="0 0 16 16" ><rect x="0" y="0" width="16" height="16" fill="#3b9bd8"/></svg><span style="letter-spacing:0.045px">Моя флешка</span></div>
<div class="f" style="left:386px;top:216px"><svg width="16" height="16" viewBox="0 0 16 16" ><rect x="3" y="2.500" width="11" height="8" fill="#0a0a32" stroke="#f5a81e" stroke-width="1.300"/><rect x="7" y="11.200" width="3" height="1.600" fill="#0a0a32"/></svg><span style="letter-spacing:0.150px">Отключить экран</span></div>
<div class="f" style="left:386px;top:237px"><svg width="16" height="16" viewBox="0 0 16 16" ><path d="M3.500 1h6l3 3v10.500h-9z" fill="#f2f2f2" stroke="#d4d4d4" stroke-width=".8"/><path d="M9.500 1v3h3z" fill="#c8c8c8"/><path d="M4 13.500h8v1h-8z" fill="#d8d8d8"/><path d="M9 9.500l5 5M14 9.500l-5 5" stroke="#c4121a" stroke-width="2"/></svg><span style="letter-spacing:-0.040px">Очистить Temp</span></div>
<div class="f" style="left:386px;top:258px"><svg width="16" height="16" viewBox="0 0 16 16" ><rect x=".5" y=".5" width="15" height="11" fill="#2a6ad8" stroke="#111" stroke-width="1.200"/><ellipse cx="7.500" cy="6" rx="5.800" ry="3.800" fill="#f2c84a"/><circle cx="4.500" cy="5.500" r="1.100" fill="#e82a8a"/><circle cx="7" cy="4" r="1" fill="#3a7ae8"/><circle cx="10" cy="4.500" r="1" fill="#e8452a"/><circle cx="5.500" cy="7.800" r="1" fill="#8a3ad8"/><path d="M14.500 1l-6 7.500" stroke="#e8e8e8" stroke-width="1.400"/><path d="M8 12v2.500M4 15.300h8M5 15l3-2 3 2" stroke="#555" stroke-width="1" fill="none"/></svg><span style="letter-spacing:-0.002px">Параметры экрана</span></div>
<div class="f" style="left:386px;top:279px"><svg width="16" height="16" viewBox="0 0 16 16" ><rect x=".5" y=".5" width="15" height="15" rx="1.500" fill="#e9a83e" stroke="#c88a28" stroke-width=".8"/><rect x="1" y="1" width="14" height="6" rx="1.500" fill="#f6c878" fill-opacity=".5"/><circle cx="10.200" cy="5.800" r="2.800" fill="none" stroke="#fff" stroke-width="1.300"/><path d="M8.200 7.800l-5.500 5.500h2.300v-1.800h1.600v-1.500" fill="none" stroke="#fff" stroke-width="1.300"/></svg><span style="letter-spacing:0.026px">Пароль Win и Bitlocker</span></div>
<div class="f" style="left:386px;top:300px"><svg width="16" height="16" viewBox="0 0 16 16" ><text x="2.500" y="6.500" font-family="Liberation Sans" font-weight="bold" font-size="7" fill="#000" stroke="#000" stroke-width=".5">N</text><text x="10" y="15.500" font-family="Liberation Sans" font-weight="bold" font-size="7.500" fill="#000" stroke="#000" stroke-width=".5">T</text><path d="M.8 15l9-8.500" stroke="#e01010" stroke-width="2.600"/><path d="M3 14.500l1.500 1M5.500 12.500l1.300 1.200" stroke="#e01010" stroke-width="1.300"/><circle cx="11.800" cy="4.300" r="3.600" fill="#e81414"/><circle cx="12.800" cy="3.300" r="1.100" fill="#fff"/><path d="M.8 15l9-8.500" stroke="#7a0808" stroke-width=".5" transform="translate(.9 .9)"/></svg><span style="letter-spacing:-0.055px">Пароль Windows удалить</span></div>
<div class="f" style="left:386px;top:321px"><svg width="16" height="16" viewBox="0 0 16 16" ><rect x=".8" y=".8" width="14.400" height="14.400" rx="2.500" fill="#2c2c86" stroke="#14144e" stroke-width="1"/><rect x="1.500" y="1.500" width="13" height="6" rx="2" fill="#5a5ab8" fill-opacity=".45"/><rect x="3.800" y="6" width="3.500" height="6.500" fill="none" stroke="#fff" stroke-width=".9"/><rect x="9" y="8.500" width="3.500" height="4" fill="none" stroke="#fff" stroke-width=".9"/><path d="M9 6.300h3M9 4.200a2.500 2.500 0 0 1 3.200 1.500" fill="none" stroke="#fff" stroke-width=".9"/></svg><span style="letter-spacing:0.016px">Повернуть экран</span></div>
<div class="f" style="left:386px;top:342px"><svg width="16" height="16" viewBox="0 0 16 16" ><circle cx="9.800" cy="6" r="4.400" fill="#fff" stroke="#f07c1a" stroke-width="2.200"/><path d="M6.500 9.500l-5 5" stroke="#f07c1a" stroke-width="2.800" stroke-linecap="round"/><circle cx="9.800" cy="6" r="5.500" fill="none" stroke="#b85a0a" stroke-width=".4"/></svg><span style="letter-spacing:0.022px">Поиск файлов</span></div>
<div class="f" style="left:386px;top:363px"><svg width="16" height="16" viewBox="0 0 16 16" ><path d="M8 1l7.300 13.700h-14.600z" fill="#f7c326" stroke="#c8860e" stroke-width="1" stroke-linejoin="round"/><path d="M8 3.500l5.400 10.200h-10.800z" fill="#fbd85a" fill-opacity=".6"/><path d="M8 6v4.800" stroke="#111" stroke-width="1.700"/><rect x="7.100" y="11.600" width="1.800" height="1.700" fill="#111"/></svg><span style="letter-spacing:-0.002px">Проверка дисков</span></div>
<div class="f" style="left:386px;top:384px"><svg width="16" height="16" viewBox="0 0 16 16" ><rect x="6.500" y=".5" width="8" height="6.500" fill="#c8d4e8" stroke="#7a869a" stroke-width=".8"/><rect x="7.800" y="1.600" width="5.400" height="4" fill="#2a4ad8"/><rect x="1.500" y="3.500" width="9" height="7.500" fill="#d4dcec" stroke="#7a869a" stroke-width=".8"/><rect x="2.800" y="4.800" width="6.400" height="4.800" fill="#1a34c8"/><rect x="3.500" y="5.300" width="2.500" height="2" fill="#7ab0f8"/><rect x="4.500" y="11" width="3" height="1.300" fill="#9aa4b4"/><path d="M6.500 12.300v2.200" stroke="#18b848" stroke-width="2"/><path d="M.5 14.800h15" stroke="#c8c8c8" stroke-width="1.200"/><path d="M4 14.800h5.500" stroke="#18b848" stroke-width="1.600"/></svg><span style="letter-spacing:-0.086px">Проводное подключение PPPoE</span></div>
<div class="f" style="left:386px;top:405px"><svg width="16" height="16" viewBox="0 0 16 16" ><rect x="2.800" y="0" width="10.400" height="15.400" fill="#ffe9a0" stroke="#f5d062" stroke-width=".8"/><text x="11" y="15.600" font-family="Liberation Serif" font-weight="bold" font-size="13" text-anchor="middle" fill="#1878d0">A</text></svg><span style="letter-spacing:-0.141px">Раскладка клавиатуры</span></div>
<div class="f" style="left:386px;top:426px"><svg width="16" height="16" viewBox="0 0 16 16" ><rect x="1" y=".5" width="14" height="13" rx="1.200" fill="#93bde4"/><rect x="1" y=".5" width="14" height="4" rx="1.200" fill="#a9cdec"/><text x="8" y="7.600" font-family="Liberation Sans" font-weight="bold" font-size="6.800" text-anchor="middle" fill="#fff" letter-spacing="-.3">BCD</text><path d="M9.800 14.600l5.400-5" stroke="#f08a1e" stroke-width="1.900"/><path d="M8.700 15.600l.5-1.500 1 1z" fill="#444"/></svg><span style="letter-spacing:-0.027px">Редактор загрузочных записей</span></div>
<div class="f" style="left:386px;top:447px"><svg width="16" height="16" viewBox="0 0 16 16" ><rect x="0" y="3.500" width="11.500" height="12.500" fill="#0c84d6"/><g fill="#3cc2f5"><rect x=".8" y="4.300" width="2.800" height="3.200"/><rect x="4.400" y="4.300" width="2.800" height="3.200"/><rect x="8" y="4.300" width="2.800" height="3.200"/><rect x=".8" y="8.300" width="2.800" height="3.200"/><rect x="4.400" y="8.300" width="2.800" height="3.200"/><rect x="8" y="8.300" width="2.800" height="3.200"/><rect x=".8" y="12.300" width="2.800" height="3"/><rect x="4.400" y="12.300" width="2.800" height="3"/><rect x="8" y="12.300" width="2.800" height="3"/></g><rect x="10.700" y="1.200" width="3.600" height="3.600" transform="rotate(45 12.500 3)" fill="#a8e0fa" stroke="#0c6fc0" stroke-width="1"/></svg><span style="letter-spacing:-0.146px">Редактор реестра выбор</span></div>
<div class="f" style="left:386px;top:468px"><svg width="16" height="16" viewBox="0 0 16 16" ><rect x="0" y="3.500" width="11.500" height="12.500" fill="#0c84d6"/><g fill="#3cc2f5"><rect x=".8" y="4.300" width="2.800" height="3.200"/><rect x="4.400" y="4.300" width="2.800" height="3.200"/><rect x="8" y="4.300" width="2.800" height="3.200"/><rect x=".8" y="8.300" width="2.800" height="3.200"/><rect x="4.400" y="8.300" width="2.800" height="3.200"/><rect x="8" y="8.300" width="2.800" height="3.200"/><rect x=".8" y="12.300" width="2.800" height="3"/><rect x="4.400" y="12.300" width="2.800" height="3"/><rect x="8" y="12.300" width="2.800" height="3"/></g><rect x="10.700" y="1.200" width="3.600" height="3.600" transform="rotate(45 12.500 3)" fill="#a8e0fa" stroke="#0c6fc0" stroke-width="1"/></svg><span style="letter-spacing:-0.216px">Редактор реестра</span></div>
<div class="f" style="left:386px;top:489px"><svg width="16" height="16" viewBox="0 0 16 16" ><path d="M.8 3.200l13-2.700 1.500 11.800-12.500 3.200z" fill="#2b5fd2" stroke="#1a3f9e" stroke-width=".6" stroke-linejoin="round"/><ellipse cx="8" cy="8" rx="5.600" ry="6" fill="#f8f9ff"/><circle cx="5.800" cy="6.300" r=".9" fill="#e82a2a"/><circle cx="10" cy="6" r=".9" fill="#e82a2a"/><path d="M4.500 9.500q3.500 3.500 7-.3" fill="none" stroke="#e82a2a" stroke-width="1.200"/></svg><span style="letter-spacing:0.018px">Скрыть все ярлыки</span></div>
<div class="f" style="left:386px;top:510px"><svg width="16" height="16" viewBox="0 0 16 16" ><rect x=".5" y="2.500" width="15" height="11" fill="#63cdf2" stroke="#3d4a52"/><path d="M1 13l4.500-5 3 3 2.500-2 4 4z" fill="#72b452"/><path d="M1 13l4.500-5 3 3 2.500-2 4 4" fill="none" stroke="#2f5a25" stroke-width=".8"/><circle cx="5.300" cy="5.300" r="1.500" fill="#ffe14d" stroke="#b88a1a" stroke-width=".5"/></svg><span style="letter-spacing:0.044px">Сменить обои Автоматически</span></div>
<div class="f" style="left:386px;top:531px"><svg width="16" height="16" viewBox="0 0 16 16" ><rect x=".5" y="2.500" width="15" height="11" fill="#63cdf2" stroke="#3d4a52"/><path d="M1 13l4.500-5 3 3 2.500-2 4 4z" fill="#72b452"/><path d="M1 13l4.500-5 3 3 2.500-2 4 4" fill="none" stroke="#2f5a25" stroke-width=".8"/><circle cx="5.300" cy="5.300" r="1.500" fill="#ffe14d" stroke="#b88a1a" stroke-width=".5"/></svg><span style="letter-spacing:0.039px">Сменить обои</span></div>
<div class="f" style="left:386px;top:552px"><svg width="16" height="16" viewBox="0 0 16 16" ><rect x="1" y="1" width="14" height="14" rx="2.800" fill="#f6c443" stroke="#e8ad2a" stroke-width=".6"/><circle cx="5.300" cy="5.300" r="1.900" fill="#e8452a"/><circle cx="10.500" cy="5.300" r="1.900" fill="#3a6ae8"/><circle cx="5.300" cy="10.500" r="1.900" fill="#48b038"/><circle cx="9.800" cy="9.800" r="1.500" fill="#f08a1e"/><circle cx="12.300" cy="12.300" r="1.500" fill="#fff"/></svg><span style="letter-spacing:-0.011px">Снимок экрана F9</span></div>
<div class="f" style="left:386px;top:573px"><svg width="16" height="16" viewBox="0 0 16 16" ><ellipse cx="8" cy="9.500" rx="7.500" ry="5.500" fill="#5a5ad0"/><ellipse cx="8" cy="8.500" rx="7.500" ry="5.300" fill="#9a9af0"/><path d="M8 8.500l-5.500-4.500a7.500 5.300 0 0 1 5.500-.8z" fill="#e8e8ff"/><path d="M8 8.500v-5.300a7.500 5.300 0 0 1 4 .8z" fill="#6a6ae0"/><ellipse cx="8" cy="8.500" rx="7.500" ry="5.300" fill="none" stroke="#3a3ab0" stroke-width=".7"/><path d="M2 3.500q3-2.500 7-1" fill="none" stroke="#3a3ab0" stroke-width=".8"/></svg><span style="letter-spacing:-0.153px">Сценарии DisPart</span></div>
<div class="f" style="left:602px;top:132px"><svg width="16" height="16" viewBox="0 0 16 16" ><rect x=".8" y=".8" width="14.400" height="11.400" rx="1" fill="#d8d8d0" stroke="#9a9a92" stroke-width=".8"/><rect x="2.300" y="2.300" width="11.400" height="8.400" fill="#fff"/><path d="M13.700 2.300v8.400h-11.400z" fill="#000"/><path d="M6 12.500h4l.8 2h-5.600z" fill="#b8b8b0"/><path d="M3.500 15h9" stroke="#a8a8a0" stroke-width="1.200"/></svg><span style="letter-spacing:-0.179px">Темная тема</span></div>
<div class="f" style="left:602px;top:153px"><svg width="16" height="16" viewBox="0 0 16 16" ><rect x=".5" y=".5" width="6.800" height="4.800" fill="#5ab4f4"/><rect x="8.700" y=".5" width="6.800" height="4.800" fill="#5ab4f4"/><rect x=".5" y="6.500" width="6.800" height="4.800" fill="#5ab4f4"/><rect x="8.700" y="6.500" width="6.800" height="4.800" fill="#5ab4f4"/><rect x=".5" y=".5" width="6.800" height="2" fill="#8acffa"/><rect x="8.700" y=".5" width="6.800" height="2" fill="#8acffa"/><path d="M8 8.500v5.500" stroke="#38b838" stroke-width="1.800"/><path d="M.5 14.800h15" stroke="#c8c8c8" stroke-width="1.500"/><path d="M4.500 14.800h7" stroke="#38b838" stroke-width="2"/></svg><span style="letter-spacing:0.056px">Удаленный рабочий стол</span></div>
<div class="f" style="left:602px;top:174px"><svg width="16" height="16" viewBox="0 0 16 16" ><path d="M3.3 .4l10.500 .7v13.300l-7.600 1.400-2.900-1.300z" fill="url(#gi)"/><path d="M3.300 .4l1.300 .5v14.300l-1.300-.7z" fill="#5ab8d8"/><path d="M6.200 14.300l7.600-1.200v1.300l-7.600 1.400z" fill="#1f8f86"/><path d="M5.200 1.900q1.400-.7 2.700 0v2.500q-1.300-.7-2.700 0z" fill="#ee4a23"/><path d="M8.300 1.900q1.300.7 2.700 0v2.500q-1.400.7-2.700 0z" fill="#4ea32c"/><path d="M4.700 5q1.400-.7 2.700 0v2.600q-1.300-.7-2.700 0z" fill="#0f6fd6"/><path d="M7.800 5.100q1.300.7 2.700 0v2.600q-1.400.7-2.700 0z" fill="#fbc70e"/><path d="M13.300 3.300c2.600-.9 3 1.300 .4 3.500" fill="none" stroke="#f59d2f" stroke-width="1.400"/><path d="M3.400 7.100c-3.600 1.500-3.900 4.400 .6 4.400 2.400 0 5-.8 7-1.800" fill="none" stroke="#f59d2f" stroke-width="1.500"/><path d="M6.500 11c1.900-.3 3.400-.8 4.700-1.600" fill="none" stroke="#fff1d4" stroke-width="1.200" stroke-linecap="round"/></svg><span style="letter-spacing:-0.211px">Установка Windows из WIM, ESD</span></div>
<div class="f" style="left:602px;top:195px"><svg width="16" height="16" viewBox="0 0 16 16" ><path d="M3.3 .4l10.500 .7v13.300l-7.600 1.400-2.900-1.300z" fill="url(#gi)"/><path d="M3.300 .4l1.300 .5v14.300l-1.300-.7z" fill="#5ab8d8"/><path d="M6.200 14.300l7.600-1.200v1.300l-7.600 1.400z" fill="#1f8f86"/><path d="M5.200 1.900q1.400-.7 2.700 0v2.500q-1.300-.7-2.700 0z" fill="#ee4a23"/><path d="M8.300 1.900q1.300.7 2.700 0v2.500q-1.400.7-2.700 0z" fill="#4ea32c"/><path d="M4.700 5q1.400-.7 2.700 0v2.600q-1.300-.7-2.700 0z" fill="#0f6fd6"/><path d="M7.800 5.100q1.300.7 2.700 0v2.600q-1.400.7-2.700 0z" fill="#fbc70e"/><path d="M13.300 3.300c2.600-.9 3 1.300 .4 3.500" fill="none" stroke="#f59d2f" stroke-width="1.400"/><path d="M3.400 7.100c-3.600 1.500-3.900 4.400 .6 4.400 2.400 0 5-.8 7-1.800" fill="none" stroke="#f59d2f" stroke-width="1.500"/><path d="M6.500 11c1.900-.3 3.400-.8 4.700-1.600" fill="none" stroke="#fff1d4" stroke-width="1.200" stroke-linecap="round"/></svg><span style="letter-spacing:0.004px">Установка Windows</span></div>
</div>
<div id="status"><span style="letter-spacing:-0.276px">Элементов: 48</span><i></i><svg style="position:absolute;left:1078px;top:3px" width="17" height="13" viewBox="0 0 17 13"><g fill="#fff" stroke="#8a8a8a" stroke-width=".8"><rect x=".5" y=".5" width="4" height="4"/><rect x=".5" y="4.500" width="4" height="4"/><rect x=".5" y="8.500" width="4" height="4"/></g><path d="M6.500 2.500h3.500M12 2.500h4M6.500 6.500h3.500M12 6.500h4M6.500 10.500h3.500M12 10.500h4" stroke="#6e6e6e" stroke-width="1"/><rect x="2" y="2" width="1" height="1" fill="#3a9a5a"/><rect x="2" y="6" width="1" height="1" fill="#3a8ae0"/><rect x="2" y="10" width="1" height="1" fill="#e03030"/></svg><svg style="position:absolute;left:1101px;top:4px" width="14" height="11" viewBox="0 0 14 11"><rect x=".5" y=".5" width="13" height="10" fill="#fff" stroke="#a8a8a8"/><rect x="2" y="2" width="10" height="7" fill="#4a88d0"/><path d="M2 9l3-2.500 3 1.500 4-3v4z" fill="#5a9a98"/><rect x="2" y="2" width="10" height="2" fill="#3a6ab8"/><path d="M2 5.500q5-2 10 0" stroke="#b8d8f0" stroke-width="1.200" fill="none"/></svg></div>
</div>
<svg style="position:absolute;left:1043px;top:478px" width="14" height="22" viewBox="0 0 14 22"><path d="M.5 .6V16.800L4.400 12.700L7.700 20.300L10.500 19.100L7.300 11.600H11.900Z" fill="#fff" stroke="#000" stroke-width="1.050" stroke-linejoin="miter"/></svg>
<div id="tbar"><div id="start"><svg style="position:absolute;left:12px;top:8px" width="24" height="24" viewBox="0 0 24 24"><path d="M0 3.400l9.800-1.400v9.500h-9.800zM10.900 1.900l13.100-1.900v11.500h-13.100zM0 12.500h9.800v9.500l-9.800-1.400zM10.900 12.500h13.100v11.500l-13.100-1.900z" fill="#fff"/></svg></div><div id="task"><svg style="position:absolute;left:13px;top:7px" width="19" height="27" viewBox="0 0 19 27"><path d="M.5 .5h16v21h-16z" fill="url(#gf2)"/><path d="M.5 .5l5.500 4.500v21.500l-5.500-5z" fill="#e8b84e"/><path d="M14 14h4.500v11h-12.500v-3.500h8z" fill="#ffe08a"/></svg><span style="letter-spacing:0.421px">link</span><div class="ul"></div></div><svg style="position:absolute;left:1746px;top:10px" width="18" height="20" viewBox="0 0 18 20"><g fill="none" stroke="#fff" stroke-width="1"><rect x="3.500" y="2.500" width="6" height="4"/><rect x="2.500" y="6.500" width="8" height="11" rx="1"/></g><path d="M8.600 15.400l2.100 1.900 4.100-4.200" fill="none" stroke="#c4ccd6" stroke-width="1"/><rect x="5" y="4" width="1" height="1" fill="#fff"/><rect x="7" y="4" width="1" height="1" fill="#fff"/></svg><svg style="position:absolute;left:1768px;top:13px" width="18" height="16" viewBox="0 0 18 16"><g fill="none" stroke="#fff" stroke-width="1"><rect x="3.500" y="1.500" width="13" height="9"/><path d="M9.500 10.500v3M6 13.500h7"/><rect x="1.500" y="1.500" width="4" height="5" fill="#00264f"/><path d="M3.500 6.500v7.500"/><path d="M2.700 3.300l.8 1 .8-1" stroke-width=".8"/></g></svg><svg style="position:absolute;left:1792px;top:12px" width="20" height="16" viewBox="0 0 20 16"><g fill="none" stroke="#fff" stroke-width="1"><path d="M1.500 5.500h3l2-3.300v11.600l-2-3.300h-3z"/><path d="M9.200 5.500a3.500 3.500 0 0 1 0 5M11.600 3.500a6.500 6.500 0 0 1 0 9M14 1.500a9.500 9.500 0 0 1 0 13"/></g></svg><span id="lang" style="letter-spacing:-1.000px">ENG</span><div id="clock"><span style="letter-spacing:-0.606px">19:03</span><br><span style="letter-spacing:-0.536px">04.09.2024</span></div><div id="sd"></div></div>
</div></body></html>
